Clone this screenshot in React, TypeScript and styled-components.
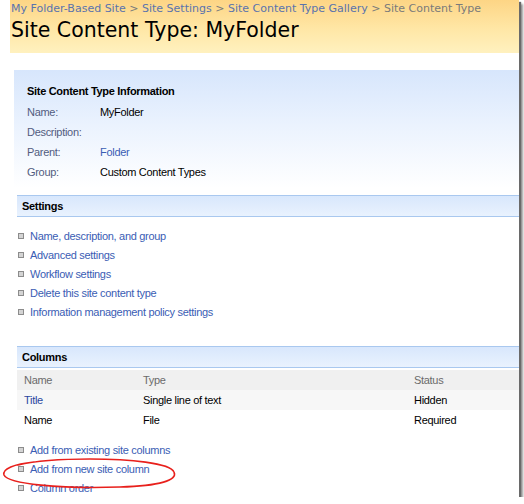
import styled, { createGlobalStyle } from "styled-components";

const GlobalStyle = createGlobalStyle`
  body {
    margin: 0;
    background: #ffffff;
  }
`;

const Frame = styled.div`
  position: relative;
  width: 519px;
  height: 497px;
  overflow: hidden;
  background: #ffffff;
  box-shadow: 2px 2px 1px #6a6a6a, 4px 4px 2px #9a9a9a;
  font-family: "Liberation Sans", Arial, sans-serif;
  font-size: 11px;
  letter-spacing: -0.3px;
  color: #000;
`;

const Header = styled.div`
  margin-left: 10px;
  height: 53px;
  padding: 2px 0 0 1px;
  box-sizing: border-box;
  background: linear-gradient(to bottom, #fdd585 0%, #ffe7a6 55%, #fff1bf 100%);
`;

const Crumbs = styled.div`
  font-family: "DejaVu Sans", Verdana, sans-serif;
  font-size: 11px;
  line-height: 14px;
  color: #7a7a7a;
  letter-spacing: 0;
`;

const Crumb = styled.span`
  color: #5a73ad;
`;

const Title = styled.h1`
  margin: 0;
  font-family: "DejaVu Sans", Verdana, sans-serif;
  font-weight: normal;
  font-size: 20.5px;
  line-height: 28px;
  letter-spacing: 0;
`;

const InfoPanel = styled.div`
  position: relative;
  box-sizing: border-box;
  margin: 17px 0 0 14px;
  height: 118px;
  padding: 14px 13px 0;
  background: linear-gradient(to bottom, #d7e6fc 0%, #eaf2fe 45%, #ffffff 100%);
`;

const InfoTitle = styled.div`
  font-weight: bold;
  line-height: 14px;
  margin-bottom: 4px;
`;

const InfoGrid = styled.div`
  display: grid;
  grid-template-columns: 73px 1fr;
  grid-auto-rows: 20px;
  align-items: center;
`;

const Label = styled.div`
  color: #525c7e;
`;

const Link = styled.span<{ $dark?: boolean }>`
  color: ${(p) => (p.$dark ? "#2a47a0" : "#3a5db4")};
`;

const SectionHeader = styled.div<{ $top: number }>`
  margin: ${(p) => p.$top}px 0 0 17px;
  height: 20px;
  line-height: 20px;
  padding-left: 5px;
  font-weight: bold;
  border-top: 1px solid #a9c8ef;
  border-bottom: 1px solid #a9c8ef;
  background: linear-gradient(to bottom, #d8e7fc, #e9f2fe);
`;

const LinkList = styled.ul<{ $top: number }>`
  list-style: none;
  margin: ${(p) => p.$top}px 0 0 18px;
  padding: 0;
`;

const LinkItem = styled.li`
  display: flex;
  align-items: center;
  height: 19px;
  gap: 6px;
  color: #3a5db4;
`;

const Bullet = styled.span`
  width: 4px;
  height: 4px;
  border: 1px solid #8c8c8c;
  background: #d4d4d4;
`;

const Table = styled.div`
  margin: 2px 0 0 17px;
`;

const Row = styled.div<{ $bg: string; $muted?: boolean }>`
  display: grid;
  grid-template-columns: 119px 271px 1fr;
  height: 20px;
  align-items: center;
  padding-left: 7px;
  background: ${(p) => p.$bg};
  color: ${(p) => (p.$muted ? "#6b6b6b" : "#000")};
`;

const Scribble = styled.svg`
  position: absolute;
  left: 0;
  top: 0;
  pointer-events: none;
`;

const settings = [
  "Name, description, and group",
  "Advanced settings",
  "Workflow settings",
  "Delete this site content type",
  "Information management policy settings",
];

const columnLinks = ["Add from existing site columns", "Add from new site column", "Column order"];

export default function App() {
  return (
    <>
      <GlobalStyle />
      <Frame>
        <Header>
          <Crumbs>
            <Crumb>My Folder-Based Site</Crumb> &gt; <Crumb>Site Settings</Crumb> &gt;{" "}
            <Crumb>Site Content Type Gallery</Crumb> &gt; Site Content Type
          </Crumbs>
          <Title>Site Content Type: MyFolder</Title>
        </Header>

        <InfoPanel>
          <InfoTitle>Site Content Type Information</InfoTitle>
          <InfoGrid>
            <Label>Name:</Label>
            <div>MyFolder</div>
            <Label>Description:</Label>
            <div />
            <Label>Parent:</Label>
            <Link>Folder</Link>
            <Label>Group:</Label>
            <div>Custom Content Types</div>
          </InfoGrid>
        </InfoPanel>

        <SectionHeader $top={7}>Settings</SectionHeader>
        <LinkList $top={9}>
          {settings.map((s) => (
            <LinkItem key={s}>
              <Bullet />
              {s}
            </LinkItem>
          ))}
        </LinkList>

        <SectionHeader $top={25}>Columns</SectionHeader>
        <Table>
          <Row $bg="#f0f0f0" $muted>
            <span>Name</span>
            <span>Type</span>
            <span>Status</span>
          </Row>
          <Row $bg="#f7f7f7">
            <Link $dark>Title</Link>
            <span>Single line of text</span>
            <span>Hidden</span>
          </Row>
          <Row $bg="#ffffff">
            <span>Name</span>
            <span>File</span>
            <span>Required</span>
          </Row>
        </Table>
        <LinkList $top={10}>
          {columnLinks.map((s) => (
            <LinkItem key={s}>
              <Bullet />
              {s}
            </LinkItem>
          ))}
        </LinkList>

        <Scribble width="519" height="497" viewBox="0 0 519 497">
          <path
            d="M34 462 C14 464 2 469 4 475 C8 484 60 489 120 487 C160 486 178 480 174 472 C170 463 130 459 90 459 C60 459 35 461 18 465"
            fill="none"
            stroke="#e8201c"
            strokeWidth="1.6"
            strokeLinecap="round"
          />
        </Scribble>
      </Frame>
    </>
  );
}
